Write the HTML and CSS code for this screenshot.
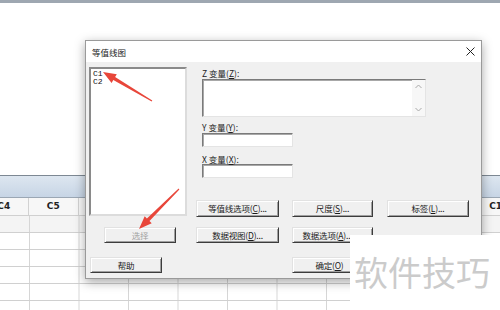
FILE: index.html
```html
<!DOCTYPE html>
<html lang="zh-CN">
<head>
    <meta charset="UTF-8">
    <meta name="viewport" content="width=device-width, initial-scale=1.0">
    <title>等值线图</title>
    <link rel="stylesheet" href="styles.css">
</head>
<body>
    <div class="topbar"></div>

    <div class="sheet">
        <div class="sheet-title"></div>
        <div class="sheet-head">
            <div class="col">C4</div>
            <div class="col">C5</div>
            <!-- C6 to C13 sit under the dialog -->
            <div class="col"></div>
            <div class="col"></div>
            <div class="col"></div>
            <div class="col"></div>
            <div class="col"></div>
            <div class="col"></div>
            <div class="col"></div>
            <div class="col"></div>
            <div class="col">C14</div>
        </div>
        <div class="sheet-cells"></div>
    </div>

    <div class="dialog">
        <div class="titlebar">
            <span class="title">等值线图</span>
            <svg class="close" width="9" height="9" viewBox="0 0 9 9">
                <path d="M0.5 0.5 L8.5 8.5 M8.5 0.5 L0.5 8.5" stroke="#222" stroke-width="1"/>
            </svg>
        </div>
        <div class="dlg-body">
            <div class="listbox">
                <div class="item">C1</div>
                <div class="item">C2</div>
            </div>

            <div class="vars">
                <label class="lbl lbl-z">Z 变量(<u>Z</u>):</label>
                <div class="field field-z">
                    <div class="scroll">
                        <svg width="7" height="5" viewBox="0 0 7 5"><path d="M0.5 4 L3.5 1 L6.5 4" fill="none" stroke="#a8a8a8"/></svg>
                        <svg width="7" height="5" viewBox="0 0 7 5"><path d="M0.5 1 L3.5 4 L6.5 1" fill="none" stroke="#a8a8a8"/></svg>
                    </div>
                </div>
                <label class="lbl lbl-y">Y 变量(<u>Y</u>):</label>
                <div class="field field-small"></div>
                <label class="lbl lbl-x">X 变量(<u>X</u>):</label>
                <div class="field field-small field-x"></div>
            </div>

            <button class="btn b-contour">等值线选项(<u>C</u>)...</button>
            <button class="btn b-scale">尺度(<u>S</u>)...</button>
            <button class="btn b-label">标签(<u>L</u>)...</button>

            <button class="btn b-select" disabled>选择</button>
            <button class="btn b-view">数据视图(<u>D</u>)...</button>
            <button class="btn b-opts">数据选项(<u>A</u>)...</button>

            <button class="btn b-help">帮助</button>
            <button class="btn b-ok">确定(<u>O</u>)</button>
        </div>
    </div>

    <div class="watermark">软件技巧</div>

    <svg class="arrows" width="500" height="310" viewBox="0 0 500 310">
        <polygon fill="#e8463a" points="103,72 116.8,74.3 115.1,77.1 152.3,100.5 151.7,101.5 113.3,80.1 111.6,82.9"/>
        <polygon fill="#e8463a" points="139,229 151.7,223.3 149.5,221.1 179.4,189.4 178.6,188.6 146.9,218.5 144.7,216.3"/>
    </svg>
</body>
</html>
```

FILE: styles.css
```css
body {
    margin: 0;
    padding: 0;
    width: 500px;
    height: 310px;
    overflow: hidden;
    position: relative;
    background-color: #ffffff;
    font-family: "Noto Sans CJK SC", sans-serif;
    font-size: 9px;
    color: #1a1a1a;
}

.topbar {
    height: 3px;
    background-color: #9ea7b1;
}

/* worksheet behind the dialog */
.sheet {
    margin-top: 172px;
}

.sheet-title {
    height: 22px;
    box-sizing: border-box;
    border-top: 1px solid #7d8893;
    background: linear-gradient(#dde6f0, #c7d5e5);
}

.sheet-head {
    display: flex;
    height: 18px;
    box-sizing: border-box;
    border-top: 1px solid #9ba7b4;
    margin-left: -20.5px;
    background-color: #f7f7f7;
}

.sheet-head .col {
    flex: 0 0 49.5px;
    box-sizing: border-box;
    border-right: 1px solid #d2d2d2;
    text-align: center;
    line-height: 17px;
    font-family: "DejaVu Sans", sans-serif;
    font-weight: bold;
    font-size: 9px;
    color: #222;
}

.sheet-cells {
    height: 100px;
    background-image:
        linear-gradient(#d0d0d0 1px, transparent 1px),
        linear-gradient(90deg, #d6d6d6 1px, transparent 1px),
        linear-gradient(#f4f4f4, #f4f4f4);
    background-size: 100% 17px, 49.5px 100%, 100% 17px;
    background-position: 0 0, 29px 0, 0 0;
    background-repeat: repeat, repeat, no-repeat;
}

/* dialog window */
.dialog {
    position: absolute;
    left: 85px;
    top: 40px;
    width: 397px;
    height: 239px;
    box-sizing: border-box;
    border: 1px solid #9a9a9a;
    background-color: #f0f0f0;
    box-shadow: 0 3px 10px rgba(0, 0, 0, 0.35);
}

.titlebar {
    height: 21px;
    display: flex;
    align-items: center;
    justify-content: space-between;
    padding: 0 6px;
    background-color: #ffffff;
}

.title {
    font-size: 8.5px;
    color: #222;
}

.dlg-body {
    display: grid;
    grid-template-columns: 98px 9px 83px 13px 81px 14px 82px;
    grid-template-rows: 133px 27px 30px 16px;
    padding: 5px 0 0 3px;
}

.listbox {
    grid-column: 1;
    grid-row: 1 / 3;
    height: 149px;
    box-sizing: border-box;
    border: 2px solid;
    border-color: #8a8a8a #dcdcdc #dcdcdc #8a8a8a;
    background-color: #ffffff;
    padding: 1px 2px 0;
    font-family: "Liberation Mono", monospace;
    font-size: 8px;
    color: #111;
}

.listbox .item {
    height: 8px;
    line-height: 8px;
}

.vars {
    grid-column: 3 / 8;
    grid-row: 1;
    margin-left: 6px;
    padding-top: 1px;
}

.lbl {
    display: block;
    height: 10px;
    line-height: 10px;
    font-size: 8.5px;
    color: #222;
}

.lbl u,
.btn u {
    text-decoration: underline;
}

.field {
    box-sizing: border-box;
    border: 1px solid;
    border-color: #7a7a7a #e4e4e4 #e4e4e4 #7a7a7a;
    box-shadow: inset 1px 1px #a8a8a8;
    background-color: #ffffff;
}

.field-z {
    width: 224px;
    height: 38px;
    margin-top: 1px;
    display: flex;
    justify-content: flex-end;
}

.scroll {
    width: 13px;
    background-color: #f7f7f7;
    display: flex;
    flex-direction: column;
    justify-content: space-between;
    align-items: center;
    padding: 4px 0;
}

.lbl-y {
    margin-top: 5px;
}

.lbl-x {
    margin-top: 7px;
}

.field-small {
    width: 91px;
    height: 14px;
    margin-top: 1px;
}

.field-x {
    margin-top: 0;
}

/* push buttons */
.btn {
    font-family: "Noto Sans CJK SC", sans-serif;
    font-size: 8.5px;
    letter-spacing: -0.2px;
    white-space: nowrap;
    overflow: hidden;
    color: #1a1a1a;
    padding: 0;
    height: 17px;
    line-height: 13px;
    box-sizing: border-box;
    border: 1px solid;
    border-color: #e2e2e2 #3c3c3c #3c3c3c #e2e2e2;
    box-shadow: inset 1px 1px #ffffff, inset -1px -1px #a0a0a0;
    background-color: #f0f0f0;
    cursor: pointer;
}

.b-contour { grid-column: 3; grid-row: 2; }
.b-scale   { grid-column: 5; grid-row: 2; }
.b-label   { grid-column: 7; grid-row: 2; }

.b-select,
.b-view,
.b-opts,
.b-help,
.b-ok {
    height: 16px;
}

.b-select {
    grid-column: 1;
    grid-row: 3;
    width: 72px;
    margin-left: 15px;
    color: #a0a0a0;
}

.b-view { grid-column: 3; grid-row: 3; }

.b-opts {
    grid-column: 5;
    grid-row: 3;
    padding-right: 10px;
}

.b-help {
    grid-column: 1;
    grid-row: 4;
    width: 72px;
    margin-left: 1px;
}

.b-ok {
    grid-column: 5;
    grid-row: 4;
    padding-right: 6px;
}

/* watermark and annotations lie over everything */
.watermark {
    position: absolute;
    left: 350px;
    top: 235px;
    right: 0;
    bottom: 0;
    background-color: #ffffff;
    padding: 20px 0 0 4px;
    font-size: 34px;
    line-height: 34px;
    color: #cbcbcb;
    white-space: nowrap;
}

.arrows {
    position: absolute;
    left: 0;
    top: 0;
    pointer-events: none;
}
```
